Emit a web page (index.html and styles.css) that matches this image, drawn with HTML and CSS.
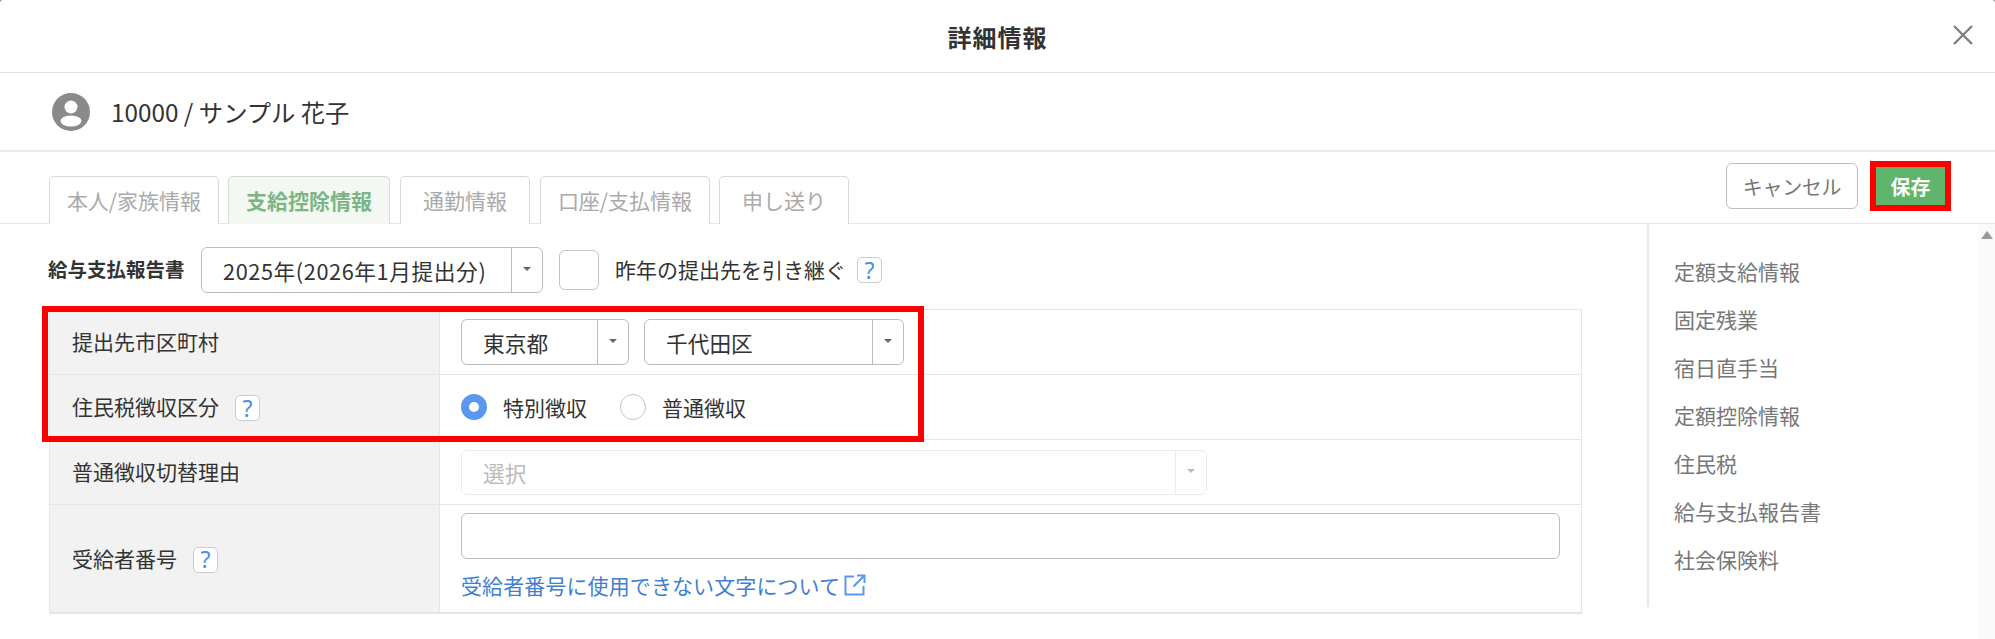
FILE: index.html
```html
<!DOCTYPE html>
<html lang="ja">
<head>
<meta charset="utf-8">
<title>詳細情報</title>
<link rel="stylesheet" href="styles.css">
</head>
<body>
<div class="dialog">
  <header class="dialog-head">
    <h1 class="dialog-title">詳細情報</h1>
    <svg class="close" viewBox="0 0 20 20" width="20" height="20"><path d="M1 1 19 19M19 1 1 19"/></svg>
  </header>
  <div class="user-row">
    <svg class="avatar" viewBox="0 0 38 38" width="38" height="38"><circle cx="19" cy="19" r="19" fill="#8a8a8a"/><circle cx="19" cy="14" r="6.5" fill="#fff"/><ellipse cx="19" cy="28" rx="10.5" ry="5.5" fill="#fff"/></svg>
    <span class="user-name">10000 / サンプル 花子</span>
  </div>
  <div class="tab-row">
    <nav class="tabs">
      <span class="tab tab-w1">本人/家族情報</span>
      <span class="tab tab-w2 tab-active">支給控除情報</span>
      <span class="tab tab-w3">通勤情報</span>
      <span class="tab tab-w4">口座/支払情報</span>
      <span class="tab tab-w5">申し送り</span>
    </nav>
    <div class="actions">
      <button class="btn-cancel">キャンセル</button>
      <span class="mark mark-save"><button class="btn-save">保存</button></span>
    </div>
  </div>
  <div class="body">
    <main class="main">
      <div class="report-row">
        <span class="report-label">給与支払報告書</span>
        <span class="select sel-report"><span class="sel-text">2025年(2026年1月提出分)</span><span class="sel-arrow"><i class="caret"></i></span></span>
        <span class="checkbox"></span>
        <span class="check-label">昨年の提出先を引き継ぐ</span>
        <span class="help">?</span>
      </div>
      <div class="table-wrap">
        <div class="row row-a">
          <div class="th">提出先市区町村</div>
          <div class="td">
            <span class="select sel-pref"><span class="sel-text">東京都</span><span class="sel-arrow"><i class="caret"></i></span></span>
            <span class="select sel-city"><span class="sel-text">千代田区</span><span class="sel-arrow"><i class="caret"></i></span></span>
          </div>
        </div>
        <div class="row row-b">
          <div class="th">住民税徴収区分<span class="help help-th">?</span></div>
          <div class="td">
            <span class="radio radio-on"></span><span class="radio-label">特別徴収</span>
            <span class="radio radio-second"></span><span class="radio-label">普通徴収</span>
          </div>
        </div>
        <div class="row row-c">
          <div class="th">普通徴収切替理由</div>
          <div class="td">
            <span class="select sel-reason sel-disabled"><span class="sel-text">選択</span><span class="sel-arrow"><i class="caret"></i></span></span>
          </div>
        </div>
        <div class="row row-d">
          <div class="th">受給者番号<span class="help help-th">?</span></div>
          <div class="td td-col">
            <span class="text-input"></span>
            <a class="link">受給者番号に使用できない文字について<svg class="ext" viewBox="0 0 22 22" width="22" height="22"><path d="M10 2.500H1.500V20.500H19.500V12M13 1.500H20.500V9M20 2 9.500 12.500"/></svg></a>
          </div>
        </div>
        <div class="mark mark-table"></div>
      </div>
    </main>
    <aside class="side">
      <ul class="side-nav">
        <li>定額支給情報</li>
        <li>固定残業</li>
        <li>宿日直手当</li>
        <li>定額控除情報</li>
        <li>住民税</li>
        <li>給与支払報告書</li>
        <li>社会保険料</li>
      </ul>
      <div class="scrollbar"><i class="scroll-up"></i></div>
    </aside>
  </div>
</div>
</body>
</html>
```

FILE: styles.css
```css
* { box-sizing: border-box; }
html, body { margin: 0; padding: 0; background: #8d8570; }
body {
  font-family: "Noto Sans CJK JP", "Noto Sans", sans-serif;
  color: #333;
  font-size: 21px;
}
.dialog { width: 1995px; height: 639px; overflow: hidden; display: flex; flex-direction: column; background: #fff; border-radius: 3px 3px 0 0; }

.dialog-head {
  height: 73px; border-bottom: 1px solid #e3e3e3;
  display: flex; align-items: center; justify-content: center; position: relative;
}
.dialog-title { margin: 0; font-size: 24px; font-weight: 700; letter-spacing: 1px; color: #333; }
.close { position: absolute; left: 1953px; top: 25px; }
.close path { stroke: #808080; stroke-width: 2.4; fill: none; }

.user-row {
  height: 79px; border-bottom: 2px solid #ebebeb;
  display: flex; align-items: center; padding-left: 52px; gap: 21px;
}
.user-name { font-size: 24.300px; color: #333; }

.tab-row {
  height: 72px; border-bottom: 1px solid #e6e6e6;
  display: flex; justify-content: space-between; padding: 0 44px 0 49px; position: relative;
}
.tabs { display: flex; gap: 9px; align-items: flex-end; }
.tab {
  height: 48px; margin-bottom: -1px; padding-bottom: 2px;
  border: 1px solid #d9d9d9; border-bottom: 0; border-radius: 5px 5px 0 0;
  display: flex; align-items: center; justify-content: center;
  color: #aaa; background: #fff;
}
.tab-w1 { width: 170px; }
.tab-w2 { width: 162px; }
.tab-w3 { width: 130px; margin-left: 1px; }
.tab-w4 { width: 170px; margin-left: 1px; }
.tab-w5 { width: 130px; }
.tab-active { background: #f3f8f3; color: #7ab583; font-weight: 700; }

.actions { display: flex; gap: 18px; align-items: flex-start; padding-top: 11px; }
.btn-cancel {
  width: 132px; height: 46px; background: #fff; border: 1px solid #bdbdbd; border-radius: 6px;
  font: inherit; font-size: 20px; color: #777; padding: 0; letter-spacing: -0.300px;
}
.mark { border: 6px solid #f00; }
.mark-save { display: block; width: 81px; height: 50px; margin-top: -2px; margin-left: -6px; }
.btn-save {
  display: block; width: 69px; height: 38px; background: #5fb56c; color: #fff; border: 0;
  font: inherit; font-size: 20px; font-weight: 700; padding: 0;
}

.body { flex: 1; display: flex; min-height: 0; }
.main { width: 1647px; padding-left: 48px; }
.report-row { display: flex; align-items: center; height: 85px; padding-top: 7px; }
.report-label { font-weight: 700; font-size: 19.500px; width: 153px; padding-bottom: 3px; }
.check-label { margin-right: 11px; padding-bottom: 3px; }

.select {
  display: inline-flex; height: 46px; background: #fff;
  border: 1px solid #bdbdbd; border-radius: 6px; align-items: stretch;
}
.sel-text { flex: 1; display: flex; align-items: center; padding-left: 21px; white-space: nowrap; font-size: 21.700px; }
.sel-arrow { width: 31px; border-left: 1px solid #bdbdbd; display: flex; align-items: center; justify-content: center; flex: none; }
.caret { width: 0; height: 0; border: 4px solid transparent; border-top: 4px solid #666; border-bottom: 0; margin-top: -3px; }
.sel-report { width: 342px; }
.sel-report .sel-text { letter-spacing: 0.600px; }
.checkbox {
  width: 40px; height: 40px; margin: 0 16px; border: 1px solid #c4c4c4; border-radius: 6px; background: #fff;
}
.help {
  display: inline-flex; width: 25px; height: 26px; align-items: center; justify-content: center;
  border: 1px solid #ccc; border-radius: 5px; color: #4a90e2; font-size: 23px; line-height: 1; font-family: "Noto Sans", sans-serif;
  background: #fff;
}
.help-th { margin-left: 16px; margin-top: 4px; }

.table-wrap { position: relative; width: 1533px; margin-left: 1px; border: 1px solid #e6e6e6; }
.row { display: flex; border-bottom: 1px solid #e6e6e6; }
.row:last-of-type { border-bottom: 0; }
.row-a { height: 65px; }
.row-b { height: 65px; }
.row-c { height: 65px; }
.row-d { height: 108px; }
.th {
  width: 390px; background: #f2f2f2; border-right: 1px solid #e6e6e6;
  display: flex; align-items: center; padding-left: 22px; padding-bottom: 2px;
}
.td { flex: 1; display: flex; align-items: center; padding-left: 21px; }
.td-col { flex-direction: column; align-items: flex-start; padding-top: 8px; }
.sel-pref { width: 168px; margin-right: 15px; }
.sel-city { width: 260px; }
.sel-reason { width: 746px; height: 45px; }
.sel-disabled { border-color: #ececec; color: #bbb; }
.sel-disabled .sel-arrow { border-left-color: #ececec; }
.sel-disabled .caret { border-top-color: #bbb; }
.radio { width: 26px; height: 26px; border-radius: 50%; border: 1px solid #c4c4c4; background: #fff; flex: none; }
.radio-on { border: 8px solid #5b97ee; }
.radio-label { margin-left: 16px; }
.radio-second { margin-left: 33px; }
.text-input { display: block; width: 1099px; height: 46px; border: 1px solid #bdbdbd; border-radius: 6px; background: #fff; }
.link { display: flex; align-items: center; margin-top: 11px; color: #3f7fd0; gap: 4px; letter-spacing: 0.100px; }
.ext path { fill: none; stroke: #5b97ee; stroke-width: 2; }
.mark-table {
  position: absolute; left: -8px; top: -4px; width: 882px; height: 136px; pointer-events: none;
}

.side { flex: 1; display: flex; color: #777; }
.side-nav {
  list-style: none; margin: 0; padding: 23px 0 0 25px; flex: 1; height: 383px;
  border-left: 2px solid #e8e8e8;
}
.side-nav li { height: 48px; line-height: 48px; }
.scrollbar { width: 17px; background: #fafafa; position: relative; }
.scroll-up {
  position: absolute; left: 3px; top: 7px; width: 0; height: 0;
  border: 6px solid transparent; border-bottom: 8px solid #999; border-top: 0;
}
```
